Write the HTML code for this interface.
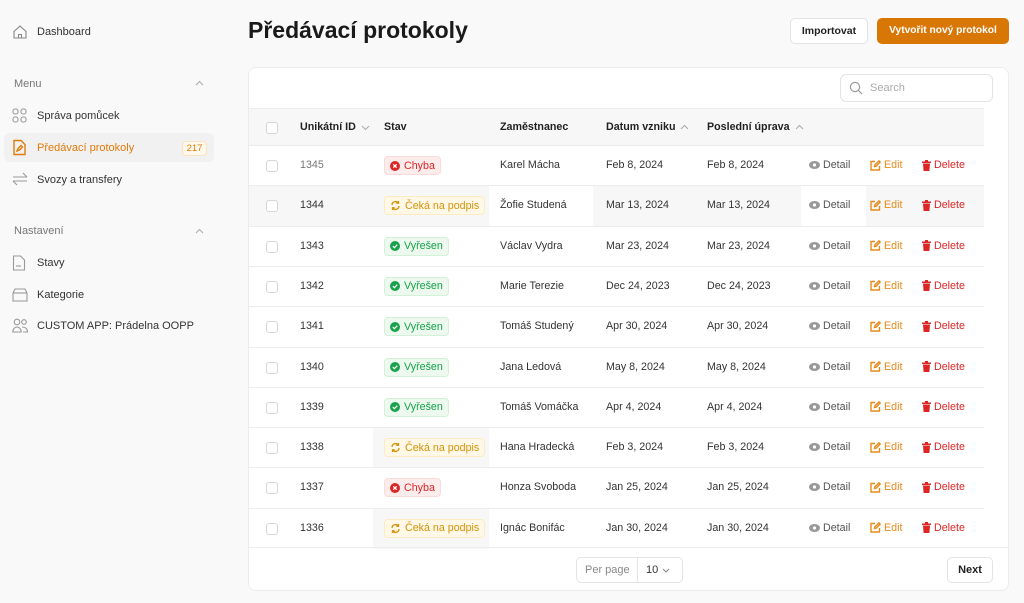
<!DOCTYPE html>
<html><head><meta charset="utf-8"><style>
*{box-sizing:border-box;margin:0;padding:0}
body{width:1024px;height:603px;background:#f9f9f9;font-family:"Liberation Sans",sans-serif;color:#222;position:relative;overflow:hidden;font-size:11px}
.a{position:absolute;white-space:nowrap}
.nav{position:absolute;left:37px;font-size:11px;color:#333}
.ico{position:absolute;left:12px}
.sec{position:absolute;left:14px;font-size:11px;color:#777}
.card{position:absolute;left:248px;top:67px;width:761px;height:524px;background:#fff;border:1px solid #ececec;border-radius:8px;overflow:hidden}
.row{position:absolute;left:0;width:735px;height:40px;border-top:1px solid #ececec}
.cb{position:absolute;left:17px;top:14px;width:12px;height:12px;border:1px solid #d6d6d6;border-radius:3px;background:#fff}
.c{position:absolute;top:13px;font-size:10.7px;color:#333}
.badge{position:absolute;top:10px;height:19px;border-radius:4px;padding:0 5px 0 5px;font-size:10.7px;line-height:18px;display:flex;align-items:center;gap:4px}
.red{background:#fdecec;color:#dc2626;border:1px solid #fbdada}
.yel{background:#fff8e6;color:#d4930a;border:1px solid #fbecc4}
.grn{background:#edf9ef;color:#16a34a;border:1px solid #d3f1d9}
.act{position:absolute;top:13px;display:flex;align-items:center;gap:3px;font-size:10.7px}
.g{position:absolute;top:0;height:40px;background:#f7f7f7}
</style></head><body>
<svg class="ico" style="top:24px" width="16" height="16" viewBox="0 0 16 16" fill="none" stroke="#888" stroke-width="1.1"><path d="M2 7.5L8 2l6 5.5V14H2z"/><path d="M6.5 14v-3.5h3V14"/></svg>
<div class="nav" style="top:26px">Dashboard</div>
<div class="sec" style="top:78px">Menu</div>
<svg class="a" style="left:195px;top:80px" width="9" height="6" viewBox="0 0 9 6" fill="none" stroke="#aaa"><path d="M1 5l3.5-3.5L8 5"/></svg>
<svg class="ico" style="top:108px" width="15" height="15" viewBox="0 0 15 15" fill="none" stroke="#999" stroke-width="1.1"><rect x="1" y="1" width="5" height="5" rx="2"/><rect x="9" y="1" width="5" height="5" rx="2"/><rect x="1" y="9" width="5" height="5" rx="2"/><rect x="9" y="9" width="5" height="5" rx="2"/></svg>
<div class="nav" style="top:110px">Správa pomůcek</div>
<div class="a" style="left:4px;top:133px;width:210px;height:29px;background:#f1f1f1;border-radius:6px"></div>
<svg class="ico" style="top:139px" width="15" height="17" viewBox="0 0 15 17" fill="none" stroke="#e07b0a" stroke-width="1.4"><path d="M2 1.5h7l4 4V15.5H2z"/><path d="M5 12l1-2.5 3-3 1.5 1.5-3 3z"/></svg>
<div class="nav" style="top:142px;color:#e07b0a">Předávací protokoly</div>
<div class="a" style="left:182px;top:141px;width:25px;height:15px;border:1px solid #fbe3c0;background:#fff8ec;border-radius:4px;color:#e07b0a;font-size:9.5px;text-align:center;line-height:13px">217</div>
<svg class="ico" style="top:172px" width="16" height="14" viewBox="0 0 16 14" fill="none" stroke="#999" stroke-width="1.1"><path d="M1 5h14M11 1l4 4M15 9H1M5 13L1 9"/></svg>
<div class="nav" style="top:174px">Svozy a transfery</div>
<div class="sec" style="top:225px">Nastavení</div>
<svg class="a" style="left:195px;top:228px" width="9" height="6" viewBox="0 0 9 6" fill="none" stroke="#aaa"><path d="M1 5l3.5-3.5L8 5"/></svg>
<svg class="ico" style="top:255px" width="14" height="16" viewBox="0 0 14 16" fill="none" stroke="#999" stroke-width="1.1"><path d="M1.5 1h7l4 4v10h-11z"/><path d="M4 11h5"/></svg>
<div class="nav" style="top:257px">Stavy</div>
<svg class="ico" style="top:288px" width="16" height="14" viewBox="0 0 16 14" fill="none" stroke="#999" stroke-width="1.1"><path d="M3 1h10l2 4v8H1V5z"/><path d="M1 5h14"/></svg>
<div class="nav" style="top:289px">Kategorie</div>
<svg class="ico" style="top:318px" width="17" height="15" viewBox="0 0 17 15" fill="none" stroke="#999" stroke-width="1.1"><circle cx="5" cy="4" r="2.8"/><circle cx="12" cy="4" r="2.3"/><path d="M0.8 14c0-3 2-5 4.2-5s4.2 2 4.2 5zM10 9c3 0 5.5 1.5 5.5 5H11"/></svg>
<div class="nav" style="top:320px">CUSTOM APP: Prádelna OOPP</div>

<div class="a" style="left:248px;top:17px;font-size:23px;font-weight:bold;color:#1a1a1a">Předávací protokoly</div>
<div class="a" style="left:790px;top:18px;width:78px;height:26px;background:#fff;border:1px solid #e3e3e3;border-radius:5px;text-align:center;line-height:24px;font-size:10.5px;font-weight:bold;color:#222">Importovat</div>
<div class="a" style="left:877px;top:18px;width:132px;height:26px;background:#d97706;border-radius:5px;text-align:center;line-height:26px;font-size:10.2px;font-weight:bold;color:#fff">Vytvořit nový protokol</div>

<div class="card">
<div class="a" style="left:591px;top:6px;width:153px;height:28px;border:1px solid #e3e3e3;border-radius:6px"></div>
<svg class="a" style="left:600px;top:13px" width="14" height="14" viewBox="0 0 14 14" fill="none" stroke="#999" stroke-width="1.2"><circle cx="6" cy="6" r="4.6"/><path d="M9.5 9.5L13 13"/></svg>
<div class="a" style="left:621px;top:14px;color:#aaa;font-size:11px">Search</div>

<div class="row" style="top:40px;height:37px;background:#f7f7f7">
<div class="cb" style="top:13px"></div>
<div class="c" style="left:51px;top:12px;font-weight:bold;color:#222">Unikátní ID</div>
<svg class="a" style="left:112px;top:16px" width="9" height="6" viewBox="0 0 9 6" fill="none" stroke="#aaa"><path d="M1 1l3.5 3.5L8 1"/></svg>
<div class="c" style="left:135px;top:12px;font-weight:bold;color:#222">Stav</div>
<div class="c" style="left:251px;top:12px;font-weight:bold;color:#222">Zaměstnanec</div>
<div class="c" style="left:357px;top:12px;font-weight:bold;color:#222">Datum vzniku</div>
<svg class="a" style="left:431px;top:15px" width="9" height="6" viewBox="0 0 9 6" fill="none" stroke="#aaa"><path d="M1 5l3.5-3.5L8 5"/></svg>
<div class="c" style="left:458px;top:12px;font-weight:bold;color:#222">Poslední úprava</div>
<svg class="a" style="left:546px;top:15px" width="9" height="6" viewBox="0 0 9 6" fill="none" stroke="#aaa"><path d="M1 5l3.5-3.5L8 5"/></svg>
</div>

<div id="rows"></div>

<div class="row" style="top:479px;width:761px;border-top:1px solid #ececec;height:45px"></div>
<div class="a" style="left:327px;top:489px;width:107px;height:26px;border:1px solid #e3e3e3;border-radius:5px"></div>
<div class="a" style="left:388px;top:489px;width:1px;height:26px;background:#e3e3e3"></div>
<div class="a" style="left:336px;top:496px;color:#888">Per page</div>
<div class="a" style="left:397px;top:496px;color:#333">10</div>
<svg class="a" style="left:413px;top:500px" width="8" height="5" viewBox="0 0 8 5" fill="none" stroke="#888"><path d="M1 1l3 3 3-3"/></svg>
<div class="a" style="left:698px;top:489px;width:46px;height:26px;border:1px solid #e3e3e3;border-radius:5px;text-align:center;line-height:24px;font-weight:bold;color:#222">Next</div>
</div>

<script>
var d=[["1345","r","Karel Mácha","Feb 8, 2024","Feb 8, 2024"],
["1344","y","Žofie Studená","Mar 13, 2024","Mar 13, 2024"],
["1343","g","Václav Vydra","Mar 23, 2024","Mar 23, 2024"],
["1342","g","Marie Terezie","Dec 24, 2023","Dec 24, 2023"],
["1341","g","Tomáš Studený","Apr 30, 2024","Apr 30, 2024"],
["1340","g","Jana Ledová","May 8, 2024","May 8, 2024"],
["1339","g","Tomáš Vomáčka","Apr 4, 2024","Apr 4, 2024"],
["1338","y","Hana Hradecká","Feb 3, 2024","Feb 3, 2024"],
["1337","r","Honza Svoboda","Jan 25, 2024","Jan 25, 2024"],
["1336","y","Ignác Bonifác","Jan 30, 2024","Jan 30, 2024"]];
var h="";
var icoR='<svg width="10" height="10" viewBox="0 0 10 10"><circle cx="5" cy="5" r="5" fill="#dc2626"/><path d="M3.3 3.3l3.4 3.4M6.7 3.3L3.3 6.7" stroke="#fff" stroke-width="1.3"/></svg>';
var icoY='<svg width="11" height="11" viewBox="0 0 11 11" fill="none" stroke="#d4930a" stroke-width="1.3"><path d="M2 5a3.5 3.5 0 0 1 6.3-2M9 6a3.5 3.5 0 0 1-6.3 2"/><path d="M8.5 1v2.2H6.3M2.5 10V7.8h2.2"/></svg>';
var icoG='<svg width="10" height="10" viewBox="0 0 10 10"><circle cx="5" cy="5" r="5" fill="#16a34a"/><path d="M2.8 5.1l1.6 1.6 2.9-3" stroke="#fff" stroke-width="1.3" fill="none"/></svg>';
d.forEach(function(r,i){
 var top=77+i*40.3;
 h+='<div class="row" style="top:'+top+'px">';
 if(i==1){h+='<div class="g" style="left:0;width:240px"></div><div class="g" style="left:344px;width:208px"></div><div class="g" style="left:617px;width:118px"></div>';}
 if(r[1]=="y"&&i!=1){h+='<div class="g" style="left:124px;width:116px"></div>';}
 h+='<div class="cb"></div><div class="c" style="left:51px;color:'+(i==0?'#777':'#333')+'">'+r[0]+'</div>';
 if(r[1]=="r")h+='<div class="badge red" style="left:135px">'+icoR+'Chyba</div>';
 if(r[1]=="y")h+='<div class="badge yel" style="left:135px">'+icoY+'Čeká na podpis</div>';
 if(r[1]=="g")h+='<div class="badge grn" style="left:135px">'+icoG+'Vyřešen</div>';
 h+='<div class="c" style="left:251px">'+r[2]+'</div><div class="c" style="left:357px">'+r[3]+'</div><div class="c" style="left:458px">'+r[4]+'</div>';
 h+='<div class="act" style="left:560px;color:#555"><svg width="11" height="8" viewBox="0 0 11 8"><ellipse cx="5.5" cy="4" rx="5.5" ry="4" fill="#999"/><circle cx="5.5" cy="4" r="1.6" fill="#fff"/></svg>Detail</div>';
 h+='<div class="act" style="left:621px;color:#e88a1a"><svg width="11" height="11" viewBox="0 0 11 11" fill="none" stroke="#e88a1a" stroke-width="1.4"><path d="M5 1.5H1v8.5h8.5V6"/><path d="M4.5 6.5l.4-1.6L9 .9l1.2 1.2-4 4z"/></svg>Edit</div>';
 h+='<div class="act" style="left:673px;color:#dc2626"><svg width="9" height="11" viewBox="0 0 9 11"><rect x="0" y="1.5" width="9" height="1.5" fill="#dc2626"/><rect x="3" y="0" width="3" height="2" fill="#dc2626"/><path d="M1 3.5h7l-.6 7.5H1.6z" fill="#dc2626"/></svg>Delete</div>';
 h+='</div>';
});
document.getElementById("rows").innerHTML=h;
</script>
</body></html>
